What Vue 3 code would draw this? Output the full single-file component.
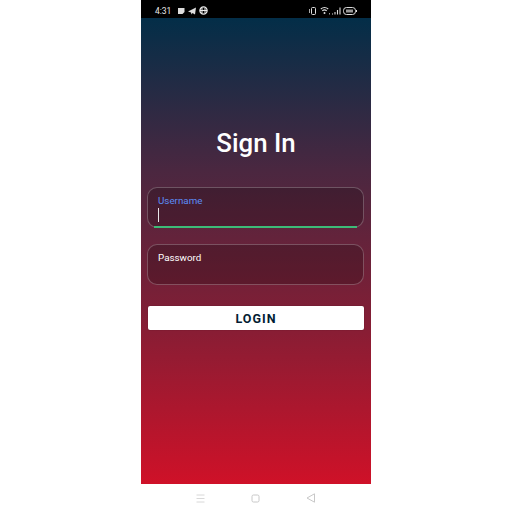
<template>
  <div class="page">
    <div class="phone">
      <div class="status">
        <div class="status-side left">
          <span class="time">4:31</span>
          <svg width="8" height="8" viewBox="0 0 8 8"><path d="M1 1h6.500v4L5.500 7H1z" fill="#ddd"/></svg>
          <svg width="8" height="8" viewBox="0 0 8 8"><path d="M0 4.500 8 .5 7 7.500 4.500 6 3.500 7.500 3 5.500z" fill="#ddd"/></svg>
          <svg width="9" height="9" viewBox="0 0 9 9"><circle cx="4.500" cy="4.500" r="3.600" fill="none" stroke="#eee" stroke-width="1.300"/><path d="M3 2v5M6 2v5M1 4.500h7" stroke="#eee" stroke-width="1"/></svg>
        </div>
        <div class="status-side right">
          <svg class="vib" width="7" height="8" viewBox="0 0 7 8"><rect x="2.500" y=".5" width="4" height="7" rx="1" fill="none" stroke="#ddd"/><path d="M.5 2v4" stroke="#aaa"/></svg>
          <svg width="10" height="9" viewBox="0 0 10 9"><path d="M.8 3q3.700-3 7.400 0M2.300 4.800q2.200-1.800 4.400 0" fill="none" stroke="#ddd" stroke-width="1.100"/><circle cx="4.500" cy="7" r="1" fill="#ddd"/><path d="M9.500 7v1.500" stroke="#999"/></svg>
          <svg width="9" height="8" viewBox="0 0 9 8"><path d="M.5 6.500v1M3 5v2.500M5.500 3v4.500M8 .5v7" stroke="#ddd" stroke-width="1.100"/></svg>
          <svg width="14" height="8" viewBox="0 0 14 8"><rect x=".5" y=".5" width="12" height="7" rx="3" fill="none" stroke="#ddd"/><rect x="3" y="2.500" width="7" height="3" fill="#999"/><path d="M13.500 3v2" stroke="#ddd"/></svg>
        </div>
      </div>

      <main class="screen">
        <h1 class="title">Sign In</h1>
        <div class="field focused">
          <span class="label">Username</span>
          <span class="caret"></span>
        </div>
        <div class="field">
          <span class="label">Password</span>
        </div>
        <button class="login">LOGIN</button>
      </main>

      <div class="nav">
        <svg width="9" height="9" viewBox="0 0 9 9"><path d="M.5 1h8M.5 4.500h8M.5 8h8" stroke="#d8d8d8"/></svg>
        <svg width="9" height="9" viewBox="0 0 9 9"><rect x="1" y="1" width="7" height="7" rx="1.500" fill="none" stroke="#c8c8c8"/></svg>
        <svg width="10" height="10" viewBox="0 0 10 10"><path d="M8.500 .8v8.400L1 5z" fill="none" stroke="#c8c8c8"/></svg>
      </div>
    </div>
  </div>
</template>

<script setup>
</script>

<style>
html, body { margin: 0; background: #fff; }
</style>

<style scoped>
.page {
  width: 512px;
  height: 512px;
  display: flex;
  justify-content: center;
  background: #fff;
  font-family: Roboto, "Liberation Sans", sans-serif;
  overflow: hidden;
}
.phone {
  width: 230px;
  height: 512px;
  display: flex;
  flex-direction: column;
}
.status {
  height: 18px;
  background: #000;
  display: flex;
  align-items: center;
  justify-content: space-between;
  padding: 3px 14px 0;
  box-sizing: border-box;
}
.status-side {
  display: flex;
  align-items: center;
}
.left { gap: 3px; }
.right { gap: 2px; }
.vib { margin-right: 2px; }
.time {
  color: #e8e8e8;
  font-size: 8.500px;
  margin-right: 3px;
}
.screen {
  height: 466px;
  background: linear-gradient(180deg, #032e48 0%, #4b2740 33%, #7d1f36 62%, #cf1128 100%);
  display: flex;
  flex-direction: column;
  align-items: flex-start;
  padding: 0 6px;
  box-sizing: border-box;
}
.title {
  align-self: center;
  margin: 109px 0 28px;
  height: 32px;
  line-height: 32px;
  font-size: 25.800px;
  font-weight: 500;
  color: #fff;
}
.field {
  position: relative;
  width: 217px;
  height: 40.500px;
  box-sizing: border-box;
  border: 1px solid rgba(255, 255, 255, 0.24);
  border-radius: 10px;
  background: rgba(0, 0, 0, 0.2);
  padding: 7px 10px;
  margin-bottom: 16.500px;
}
.field.focused::after {
  content: "";
  position: absolute;
  left: 6px;
  right: 6px;
  bottom: -1px;
  height: 2px;
  background: #3dbb78;
}
.label {
  display: block;
  font-size: 9.800px;
  line-height: 11px;
  color: #fff;
}
.focused .label { color: #5b8cf5; }
.caret {
  display: block;
  width: 1px;
  height: 14px;
  margin-top: 2px;
  background: #e8e4e8;
}
.login {
  width: 216px;
  height: 24px;
  margin: 5px 0 0 1px;
  border: 0;
  border-radius: 2px;
  background: #fff;
  color: #031c33;
  font: 700 12.500px Roboto, "Liberation Sans", sans-serif;
  letter-spacing: 1px;
  box-shadow: 0 0 1px rgba(0, 0, 0, 0.5);
}
.nav {
  height: 28px;
  background: #fff;
  display: flex;
  align-items: center;
  justify-content: center;
  gap: 46px;
}
</style>
